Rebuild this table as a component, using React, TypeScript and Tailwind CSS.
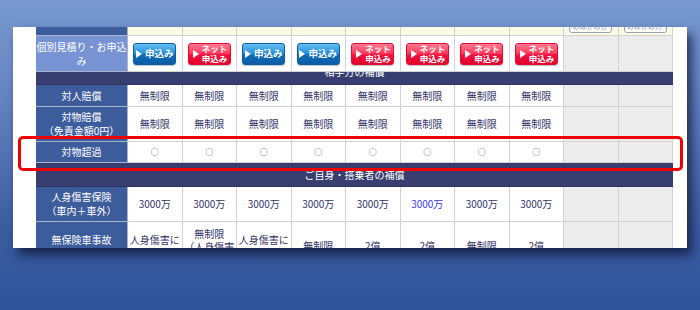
import React from "react";

type CellProps = { children?: React.ReactNode; className?: string };

function Cell({ children, className = "" }: CellProps) {
  return (
    <div
      className={`flex flex-col items-center justify-center text-center border-r border-b border-[#d2d2d2] overflow-hidden ${className}`}
    >
      {children}
    </div>
  );
}

function LeftCell({ children, className = "" }: CellProps) {
  return (
    <div
      className={`flex flex-col items-center justify-center text-center text-white border-r border-b border-[#aab5cc] overflow-hidden leading-[14px] ${className}`}
    >
      {children}
    </div>
  );
}

function Tri() {
  return <span className="w-0 h-0 border-l-[6px] border-l-white border-y-[4px] border-y-transparent shrink-0" />;
}

function BlueBtn() {
  return (
    <div className="w-[43px] h-[22px] rounded-[3px] border border-[#0d5ea4] bg-[linear-gradient(180deg,#63bdf2_0%,#2a93dc_45%,#0f6cb8_55%,#0b5da6_100%)] flex items-center justify-center gap-[3px] text-white font-bold text-[9.5px] leading-none shadow-[0_1px_1px_rgba(0,0,0,0.25)]">
      <Tri />
      <span>申込み</span>
    </div>
  );
}

function RedBtn() {
  return (
    <div className="w-[43px] h-[22px] rounded-[3px] border border-[#df0a36] bg-[linear-gradient(180deg,#ff7a90_0%,#ff3d5f_45%,#f3123f_55%,#e0002a_100%)] flex items-center pl-[4px] gap-[3px] text-white font-bold text-[8.5px] leading-[9.5px] shadow-[0_1px_1px_rgba(0,0,0,0.25)]">
      <Tri />
      <span className="flex flex-col items-center">
        <span className="leading-[9.5px]">ネット</span>
        <span className="leading-[9.5px]">申込み</span>
      </span>
    </div>
  );
}

function SmallBtn() {
  return (
    <div className="w-[43px] h-[14px] mb-[2px] rounded-[3px] border border-[#9aa3b5] bg-white text-[#8890a0] text-[7px] leading-[12px] flex items-center justify-center whitespace-nowrap overflow-hidden">
      そのほかの方 ▼
    </div>
  );
}

const GREY = "bg-[#ececec]";

export default function App() {
  const textBlue = "text-[#34346a]";
  const v = ["無制限", "無制限", "無制限", "無制限", "無制限", "無制限", "無制限", "無制限"];
  const buttons = ["b", "r", "b", "b", "r", "r", "r", "r"];
  return (
    <div className="relative w-[700px] h-[310px] overflow-hidden pt-[27px] pl-[13px] bg-[linear-gradient(180deg,#7898cf_0%,#6c8cc8_22%,#5273b4_50%,#3a5c9f_75%,#31539a_100%)] font-['Noto_Sans_CJK_JP',sans-serif]">
      <div className="w-[674px] h-[221px] bg-white overflow-hidden pl-[23px] shadow-[5px_7px_10px_rgba(12,22,55,0.75)]">
        <div className="w-[637px] -mt-[15px] grid grid-cols-[92px_repeat(10,minmax(0,1fr))] text-[10px] leading-[14px]">
          {/* top partial row */}
          <LeftCell className="h-[24px] bg-[#3d5c9c]" />
          {Array.from({ length: 8 }).map((_, i) => (
            <Cell key={"t" + i} className="h-[24px] bg-[#fcfae4]" />
          ))}
          <Cell className="h-[24px] bg-[#fcfae4] !justify-end">
            <SmallBtn />
          </Cell>
          <Cell className="h-[24px] bg-[#fcfae4] !justify-end">
            <SmallBtn />
          </Cell>

          {/* 個別見積り row */}
          <LeftCell className="h-[36px] bg-[#7793d4] whitespace-nowrap">
            <span>個別見積り・お申込</span>
            <span>み</span>
          </LeftCell>
          {buttons.map((b, i) => (
            <Cell key={"b" + i} className="h-[36px] bg-white">
              {b === "b" ? <BlueBtn /> : <RedBtn />}
            </Cell>
          ))}
          <Cell className={`h-[36px] ${GREY}`} />
          <Cell className={`h-[36px] ${GREY}`} />

          {/* section 1 */}
          <div className="col-span-11 h-[13px] bg-[#383f70] overflow-hidden flex justify-center border-b border-[#2c3360]">
            <span className="text-white text-[10px] leading-[13px] -mt-[7px]">相手方の補償</span>
          </div>

          {/* 対人賠償 */}
          <LeftCell className="h-[22px] bg-[#3d5c9c]">対人賠償</LeftCell>
          {v.map((t, i) => (
            <Cell key={"a" + i} className={`h-[22px] bg-white ${textBlue}`}>
              {t}
            </Cell>
          ))}
          <Cell className={`h-[22px] ${GREY}`} />
          <Cell className={`h-[22px] ${GREY}`} />

          {/* 対物賠償 */}
          <LeftCell className="h-[35px] bg-[#3d5c9c]">
            <span>対物賠償</span>
            <span>（免責金額0円）</span>
          </LeftCell>
          {v.map((t, i) => (
            <Cell key={"o" + i} className={`h-[35px] bg-white ${textBlue}`}>
              {t}
            </Cell>
          ))}
          <Cell className={`h-[35px] ${GREY}`} />
          <Cell className={`h-[35px] ${GREY}`} />

          {/* 対物超過 */}
          <LeftCell className="h-[21px] bg-[#3d5c9c]">対物超過</LeftCell>
          {v.map((_, i) => (
            <Cell key={"c" + i} className={`h-[21px] bg-white ${textBlue} text-[8px]`}>
              ○
            </Cell>
          ))}
          <Cell className={`h-[21px] ${GREY}`} />
          <Cell className={`h-[21px] ${GREY}`} />

          {/* section 2 */}
          <div className="col-span-11 h-[24px] bg-[#383f70] flex items-center justify-center border-b border-[#2c3360]">
            <span className="text-white text-[10px] leading-[13px]">ご自身・搭乗者の補償</span>
          </div>

          {/* 人身傷害保険 */}
          <LeftCell className="h-[35px] bg-[#3d5c9c]">
            <span>人身傷害保険</span>
            <span>（車内＋車外）</span>
          </LeftCell>
          {v.map((_, i) => (
            <Cell key={"j" + i} className={`h-[35px] bg-white ${i === 5 ? "text-[#3a3aee]" : textBlue}`}>
              3000万
            </Cell>
          ))}
          <Cell className={`h-[35px] ${GREY}`} />
          <Cell className={`h-[35px] ${GREY}`} />

          {/* 無保険車事故 */}
          <LeftCell className="h-[49px] bg-[#3d5c9c] pb-[13px]">無保険車事故</LeftCell>
          <Cell className={`h-[49px] bg-white ${textBlue} leading-[13px] pb-[13px]`}>人身傷害に</Cell>
          <Cell className={`h-[49px] bg-white ${textBlue} leading-[13px]`}>
            <span>無制限</span>
            <span className="whitespace-nowrap">（人身傷害</span>
            <span>に含む）</span>
          </Cell>
          <Cell className={`h-[49px] bg-white ${textBlue} leading-[13px] pb-[13px]`}>人身傷害に</Cell>
          <Cell className={`h-[49px] bg-white ${textBlue}`}>無制限</Cell>
          <Cell className={`h-[49px] bg-white ${textBlue}`}>2億</Cell>
          <Cell className={`h-[49px] bg-white ${textBlue}`}>2億</Cell>
          <Cell className={`h-[49px] bg-white ${textBlue}`}>無制限</Cell>
          <Cell className={`h-[49px] bg-white ${textBlue}`}>2億</Cell>
          <Cell className={`h-[49px] ${GREY}`} />
          <Cell className={`h-[49px] ${GREY}`} />
        </div>
      </div>

      {/* red highlight */}
      <div className="absolute left-[18px] top-[136px] w-[665px] h-[35px] border-[3px] border-[#f00000] rounded-[5px] pointer-events-none" />
    </div>
  );
}
